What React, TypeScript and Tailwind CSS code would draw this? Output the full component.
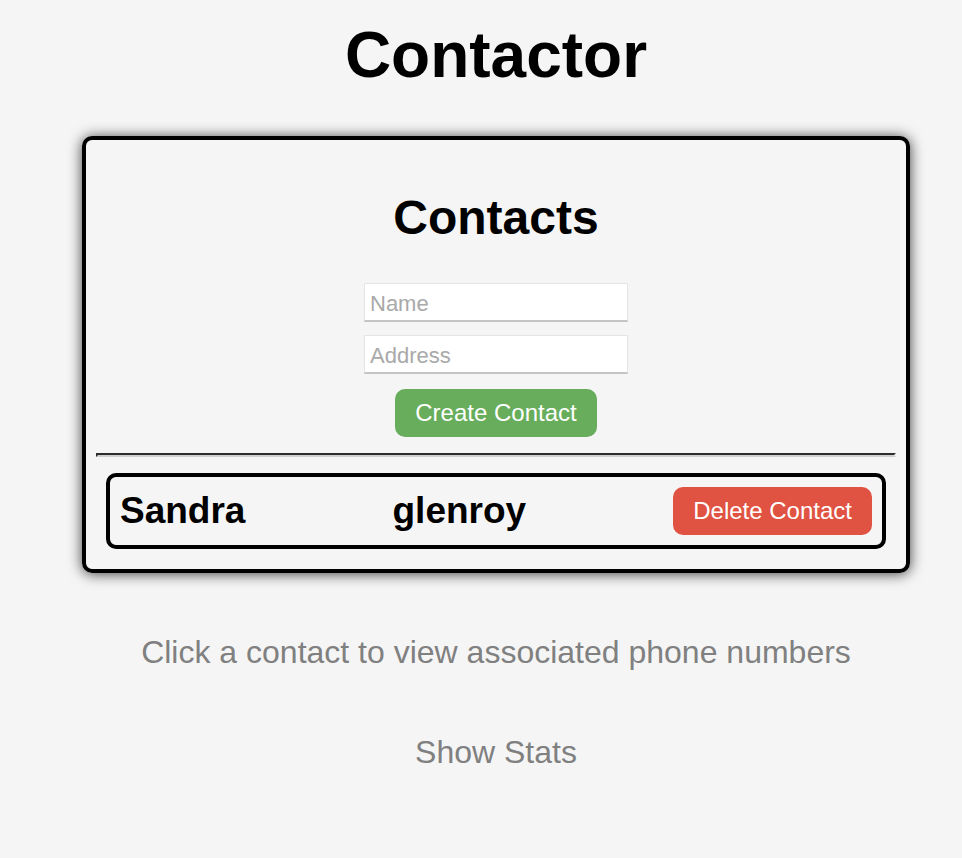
import React from "react";

function ContactField({ label }: { label: string }) {
  return (
    <input
      aria-label={label}
      placeholder={label}
      className="h-[39px] w-[264px] border border-[#e4e4e4] border-b-2 border-b-[#c4c4c4] bg-white px-[5px] pt-[3px] text-[22px] placeholder:text-[#a9a9a9] placeholder:opacity-100"
    />
  );
}

function ContactForm() {
  return (
    <form className="flex flex-col items-center" onSubmit={(e) => e.preventDefault()}>
      <div className="mb-[15px] flex flex-col gap-[13px]">
        <ContactField label="Name" />
        <ContactField label="Address" />
      </div>
      <button className="h-12 rounded-[10px] bg-[#67ad5b] px-5 text-2xl text-white">
        Create Contact
      </button>
    </form>
  );
}

function ContactRow({ name, address }: { name: string; address: string }) {
  return (
    <div className="mx-2.5 flex items-center justify-between rounded-[10px] border-4 border-black p-2.5">
      <h3 className="text-[37px] leading-[44px] font-bold">{name}</h3>
      <h3 className="text-[37px] leading-[44px] font-bold">{address}</h3>
      <button className="h-12 rounded-[10px] bg-[#e05241] px-5 text-2xl text-white">
        Delete Contact
      </button>
    </div>
  );
}

export default function App() {
  return (
    <div className="min-h-screen bg-[#f5f5f5] pr-[52px] pl-[82px] font-['Liberation_Sans',Arial,sans-serif] text-black">
      <h1 className="pt-[18px] text-center text-[64px] leading-[74px] font-bold">Contactor</h1>
      <main className="mt-11 rounded-[10px] border-4 border-black p-2.5 pb-5 shadow-[0_1px_14px_rgba(0,0,0,0.75)]">
        <h2 className="mt-10 mb-[38px] text-center text-[48px] leading-[55px] font-bold">Contacts</h2>
        <ContactForm />
        <hr className="my-4 border-2 border-t-[#2c2c2c] border-r-[#eee] border-b-[#d0d0d0] border-l-[#2c2c2c]" />
        <ContactRow name="Sandra" address="glenroy" />
      </main>
      <div className="mt-[59px] flex flex-col gap-[60px] text-center text-[32px] leading-10 text-[#808080]">
        <p>Click a contact to view associated phone numbers</p>
        <p>Show Stats</p>
      </div>
    </div>
  );
}
